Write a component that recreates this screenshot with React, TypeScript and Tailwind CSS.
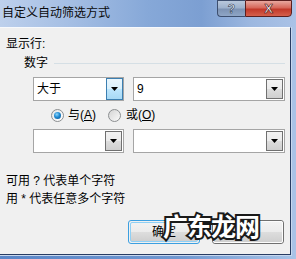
import React from "react";

function Arrow() {
  return (
    <svg width="7" height="4" viewBox="0 0 7 4">
      <polygon points="0,0 7,0 3.5,4" fill="#000" />
    </svg>
  );
}

function Combo({ w, text, hot }: { w: string; text?: string; hot?: boolean }) {
  return (
    <div className={`${w} h-[24px] bg-white border border-[#a5a5a5] flex items-stretch`}>
      <div className="flex-1 pl-[3px] flex items-center text-[12px] leading-[16px] text-black">{text}</div>
      {hot ? (
        <div className="w-[17px] border border-[#3c7fb1] bg-[linear-gradient(180deg,#eaf6fd_0%,#d9f0fc_50%,#bee6fd_51%,#a7d9f5_100%)] flex items-center justify-center">
          <Arrow />
        </div>
      ) : (
        <div className="w-[17px] m-[1px] ml-0 border border-[#707070] bg-[linear-gradient(180deg,#f2f2f2_0%,#ebebeb_50%,#dddddd_51%,#cfcfcf_100%)] flex items-center justify-center">
          <Arrow />
        </div>
      )}
    </div>
  );
}

export default function App() {
  return (
    <div className='w-[296px] h-[259px] flex flex-col bg-[#a9c2e6] overflow-hidden font-["Liberation_Sans","Noto_Sans_CJK_SC",sans-serif] text-black'>
      {/* title bar */}
      <div className="h-[27px] shrink-0 flex justify-between bg-[linear-gradient(90deg,#bdd0ec_0%,#a3bde3_25%,#86a8d8_50%,#7c9fd2_68%,#9db8e0_85%,#aac2e6_100%)]">
        <div className="pl-[2px] pt-[5px] text-[12px] leading-[16px] text-[#0a0a0a]">自定义自动筛选方式</div>
        <div className="flex mr-[4px] h-[17px]">
          <div className="w-[28px] h-[17px] border border-[#3d4f6f] border-r-0 rounded-bl-[4px] bg-[linear-gradient(180deg,#b9c8dc_0%,#9eb2cd_45%,#7d93b4_55%,#8fa6c6_100%)] flex items-center justify-center">
            <span className="text-white font-bold text-[12px] leading-none [-webkit-text-stroke:0.6px_#233552]">?</span>
          </div>
          <div className="w-[47px] h-[17px] border border-[#5a1f1f] rounded-br-[4px] bg-[linear-gradient(180deg,#e8a89f_0%,#d6675a_45%,#c2392a_55%,#d5604c_100%)] flex items-center justify-center">
            <span className="text-white font-bold text-[13px] leading-none [-webkit-text-stroke:0.6px_#4a1010]">X</span>
          </div>
        </div>
      </div>

      {/* middle */}
      <div className="flex-1 flex">
        <div className="w-[292px] flex border-r border-b border-[#c7d7ee]">
          <div className="flex-1 relative bg-[#f0f0f0] border-t border-t-[#f7f9fc] border-r border-b border-r-[#283c63] border-b-[#283c63] flex flex-col">
            <div className="mt-[8px] pl-[6px] text-[12px] leading-[16px]">显示行:</div>
            <div className="mt-[3px] pl-[24px] flex items-center">
              <span className="text-[12px] leading-[16px]">数字</span>
              <div className="flex-1 h-px bg-[#d5dfe5] ml-[6px] mr-[5px]" />
            </div>
            <div className="mt-[6px] pl-[33px] flex gap-[9px]">
              <Combo w="w-[91px]" text="大于" hot />
              <Combo w="w-[152px]" text="9" />
            </div>
            <div className="mt-[6px] h-[16px] pl-[51px] flex items-center text-[12px] leading-[16px]">
              <div className="w-[13px] h-[13px] rounded-full border border-[#8c8f91] bg-[linear-gradient(135deg,#e6e6e6,#ffffff)] flex items-center justify-center">
                <div className="w-[7px] h-[7px] rounded-full bg-[radial-gradient(circle_at_40%_35%,#8fd6fa_0%,#1f8ad3_45%,#0a4f8a_100%)]" />
              </div>
              <span className="ml-[4px]">与(<span className="underline">A</span>)</span>
              <div className="ml-[12px] w-[13px] h-[13px] rounded-full border border-[#8c8f91] bg-[linear-gradient(135deg,#d4d4d4,#fafafa)]" />
              <span className="ml-[5px]">或(<span className="underline">O</span>)</span>
            </div>
            <div className="mt-[6px] pl-[33px] flex gap-[9px]">
              <Combo w="w-[91px]" />
              <Combo w="w-[152px]" />
            </div>
            <div className="mt-[19px] pl-[6px] text-[12px] leading-[18px]">
              <div>可用 ? 代表单个字符</div>
              <div>用 * 代表任意多个字符</div>
            </div>
            <div className="mt-[12px] pl-[128px] flex gap-[12px]">
              <div className="w-[72px] h-[24px] rounded-[3px] border border-[#3c9fe0] p-px">
                <div className="w-full h-full rounded-[2px] border border-[#8fd0f5] bg-[linear-gradient(180deg,#f2f2f2_0%,#ebebeb_50%,#dddddd_51%,#cfcfcf_100%)] flex items-center justify-center text-[12px] leading-[16px]">确定</div>
              </div>
              <div className="w-[72px] h-[24px] rounded-[3px] border border-[#707070]">
                <div className="w-full h-full rounded-[2px] border border-[#fcfcfc] bg-[linear-gradient(180deg,#f2f2f2_0%,#ebebeb_50%,#dddddd_51%,#cfcfcf_100%)] flex items-center justify-center text-[12px] leading-[16px]">取消</div>
              </div>
            </div>
            {/* watermark */}
            <div className="absolute left-[163px] top-[185px] text-[25px] leading-[28px] font-bold text-white [-webkit-text-stroke:4px_#1a1a1a] [paint-order:stroke_fill] tracking-[-1px]">
              广东龙网
            </div>
          </div>
        </div>
      </div>
      <div className="h-[3px] shrink-0 bg-[linear-gradient(90deg,#5a86c8_0%,#6f97d0_60%,#a8c4e8_100%)]" />
    </div>
  );
}
